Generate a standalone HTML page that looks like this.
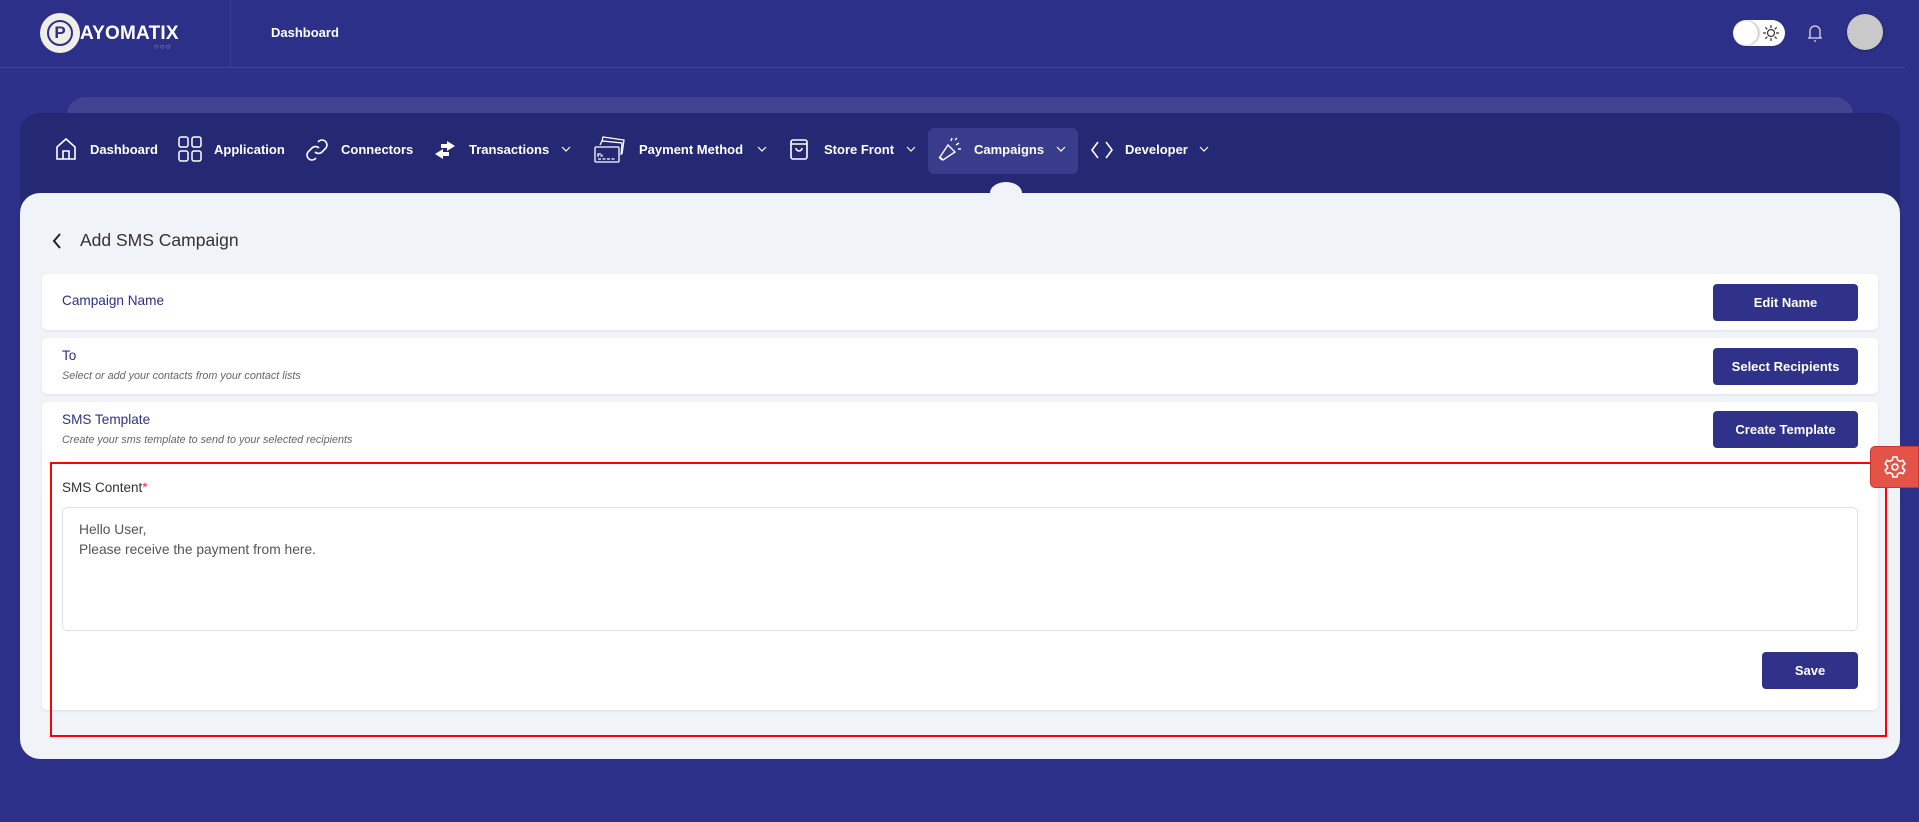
<!DOCTYPE html>
<html><head><meta charset="utf-8"><style>
*{box-sizing:border-box;margin:0;padding:0}
body{width:1919px;height:822px;background:#2d3088;font-family:"Liberation Sans",sans-serif;position:relative;overflow:hidden}
.a{position:absolute}
.nav{color:#fff;font-weight:bold;font-size:13px;top:142px}
.ch{top:143px}
.card{position:absolute;left:42px;width:1836px;background:#fff;border-radius:5px;box-shadow:0 1px 2px rgba(0,0,0,.08)}
.t{position:absolute;left:20px;color:#2d3088;font-size:13.6px}
.s{position:absolute;left:20px;color:#666;font-size:10.8px;font-style:italic}
.btn{position:absolute;background:#2f3288;color:#fff;font-weight:bold;font-size:13px;border-radius:4px;text-align:center}
</style></head><body>
<!-- header -->
<div class="a" style="left:40px;top:13px;width:40px;height:40px;border-radius:50%;background:#f0eee8"></div>
<div class="a" style="left:47px;top:20px;width:26px;height:26px;border-radius:50%;border:2px solid #2d3088;color:#2d3088;font-weight:bold;font-size:17px;text-align:center;line-height:22px">P</div>
<div class="a" style="left:80px;top:23px;color:#fff;font-weight:bold;font-size:19px;letter-spacing:0.2px">AYOMATIX</div>
<div class="a" style="left:154px;top:42px;color:#aaa;font-size:8px;letter-spacing:1px">○○○</div>
<div class="a" style="left:230px;top:0;width:1px;height:67px;background:#3c3f96"></div>
<div class="a" style="left:0;top:67px;width:1905px;height:1px;background:#3f43a0"></div>
<div class="a" style="left:271px;top:25px;color:#fff;font-weight:bold;font-size:13px">Dashboard</div>
<div class="a" style="left:1733px;top:20px;width:52px;height:26px;border-radius:13px;background:#fff"></div>
<div class="a" style="left:1734px;top:21px;width:24px;height:24px;border-radius:50%;background:#fff;box-shadow:1px 0 2px rgba(0,0,0,.35)"></div>
<svg class="a" style="left:1762px;top:24px" width="18" height="18" viewBox="0 0 18 18" fill="none" stroke="#333" stroke-width="1.2"><circle cx="9" cy="9" r="3.5"/><path d="M9 1v3M9 14v3M1 9h3M14 9h3M3.3 3.3l2 2M12.7 12.7l2 2M3.3 14.7l2-2M12.7 5.3l2-2"/></svg>
<svg class="a" style="left:1806px;top:22px" width="18" height="22" viewBox="0 0 18 22" fill="none" stroke="#ddd" stroke-width="1.3"><path d="M4 16V9a5 5 0 0110 0v7M2 16h14M8 19h2"/></svg>
<div class="a" style="left:1847px;top:14px;width:36px;height:36px;border-radius:50%;background:#c9c9c9;box-shadow:0 1px 3px rgba(0,0,0,.3)"></div>
<!-- bands -->
<div class="a" style="left:67px;top:97px;width:1786px;height:40px;border-radius:18px 18px 0 0;background:#414292"></div>
<div class="a" style="left:20px;top:113px;width:1880px;height:140px;border-radius:20px 20px 0 0;background:#252872"></div>
<div class="a" style="left:928px;top:128px;width:150px;height:46px;border-radius:6px;background:#393b8b"></div>
<div class="a" style="left:990px;top:182px;width:32px;height:22px;border-radius:50% 50% 0 0;background:#f0f3f8"></div>
<div class="a" style="left:20px;top:193px;width:1880px;height:566px;border-radius:20px;background:#f0f3f8"></div>
<!-- nav icons -->
<svg class="a" style="left:55px;top:137px" width="22" height="24" viewBox="0 0 22 24" fill="none" stroke="#fff" stroke-width="1.6"><path d="M2 10L11 2l9 8v12H2zM8 22v-8h6v8"/></svg>
<svg class="a" style="left:178px;top:136px" width="24" height="26" viewBox="0 0 24 26" fill="none" stroke="#fff" stroke-width="1.5"><rect x="1" y="1" width="9" height="10" rx="2"/><rect x="14" y="1" width="9" height="10" rx="2"/><rect x="1" y="15" width="9" height="10" rx="2"/><rect x="14" y="15" width="9" height="10" rx="2"/></svg>
<svg class="a" style="left:305px;top:138px" width="24" height="24" viewBox="0 0 24 24" fill="none" stroke="#fff" stroke-width="1.6"><path d="M10 14a5 5 0 007 0l4-4a5 5 0 00-7-7l-1 1M14 10a5 5 0 00-7 0l-4 4a5 5 0 007 7l1-1"/></svg>
<svg class="a" style="left:433px;top:140px" width="24" height="20" viewBox="0 0 24 20" fill="#fff"><path d="M14 1l8 5-8 5V8H8V4h6zM10 9l-8 5 8 5v-3h6v-4h-6z"/></svg>
<svg class="a" style="left:594px;top:136px" width="32" height="28" viewBox="0 0 32 28" fill="none" stroke="#fff" stroke-width="1.3"><path d="M8 5l1-4 21 3-2 14"/><path d="M6 9l2-4 20 2-1 12"/><rect x="1" y="11" width="24" height="15" rx="1"/><path d="M4 18h4v2H4zM4 23h18" stroke-dasharray="3 1.5"/></svg>
<svg class="a" style="left:790px;top:137px" width="18" height="24" viewBox="0 0 18 24" fill="none" stroke="#fff" stroke-width="1.6"><rect x="1" y="3" width="16" height="19" rx="2"/><path d="M1 7h16M6 11a3 3 0 006 0"/></svg>
<svg class="a" style="left:937px;top:137px" width="26" height="26" viewBox="0 0 26 26" fill="none" stroke="#fff" stroke-width="1.4"><path d="M3 20l8-12 7 7-12 8zM5 23l-3-3M14 4l1-3M19 8l3-2M18 3l2-2M21 12h3"/></svg>
<svg class="a" style="left:1090px;top:140px" width="24" height="20" viewBox="0 0 24 20" fill="none" stroke="#fff" stroke-width="1.6"><path d="M8 2L2 10l6 8M16 2l6 8-6 8"/></svg>
<div class="a nav" style="left:90px">Dashboard</div>
<div class="a nav" style="left:214px">Application</div>
<div class="a nav" style="left:341px">Connectors</div>
<div class="a nav" style="left:469px">Transactions</div>
<div class="a nav" style="left:639px">Payment Method</div>
<div class="a nav" style="left:824px">Store Front</div>
<div class="a nav" style="left:974px">Campaigns</div>
<div class="a nav" style="left:1125px">Developer</div>
<svg class="a ch" style="left:560px" width="12" height="12" viewBox="0 0 12 12" fill="none" stroke="#fff" stroke-width="1.2"><path d="M2 4l4 4 4-4"/></svg>
<svg class="a ch" style="left:756px" width="12" height="12" viewBox="0 0 12 12" fill="none" stroke="#fff" stroke-width="1.2"><path d="M2 4l4 4 4-4"/></svg>
<svg class="a ch" style="left:905px" width="12" height="12" viewBox="0 0 12 12" fill="none" stroke="#fff" stroke-width="1.2"><path d="M2 4l4 4 4-4"/></svg>
<svg class="a ch" style="left:1055px" width="12" height="12" viewBox="0 0 12 12" fill="none" stroke="#fff" stroke-width="1.2"><path d="M2 4l4 4 4-4"/></svg>
<svg class="a ch" style="left:1198px" width="12" height="12" viewBox="0 0 12 12" fill="none" stroke="#fff" stroke-width="1.2"><path d="M2 4l4 4 4-4"/></svg>
<!-- content -->
<svg class="a" style="left:50px;top:232px" width="14" height="18" viewBox="0 0 14 18" fill="none" stroke="#222" stroke-width="2"><path d="M10 2L4 9l6 7"/></svg>
<div class="a" style="left:80px;top:230px;font-size:17.5px;color:#333">Add SMS Campaign</div>
<div class="card" style="top:274px;height:56px"><div class="t" style="top:19px">Campaign Name</div></div>
<div class="card" style="top:338px;height:56px"><div class="t" style="top:10px">To</div><div class="s" style="top:32px">Select or add your contacts from your contact lists</div></div>
<div class="card" style="top:402px;height:308px"><div class="t" style="top:10px">SMS Template</div><div class="s" style="top:32px">Create your sms template to send to your selected recipients</div>
<div class="a" style="left:20px;top:78px;font-size:13.5px;color:#333">SMS Content<span style="color:#e33">*</span></div>
<div class="a" style="left:20px;top:105px;width:1796px;height:124px;border:1px solid #dde2ea;border-radius:5px;padding:12px 16px;font-size:13.8px;line-height:20px;color:#555">Hello User,<br>Please receive the payment from here.</div>
</div>
<div class="btn" style="left:1713px;top:284px;width:145px;height:37px;line-height:37px">Edit Name</div>
<div class="btn" style="left:1713px;top:348px;width:145px;height:37px;line-height:37px">Select Recipients</div>
<div class="btn" style="left:1713px;top:411px;width:145px;height:37px;line-height:37px">Create Template</div>
<div class="btn" style="left:1762px;top:652px;width:96px;height:37px;line-height:37px">Save</div>
<div class="a" style="left:50px;top:462px;width:1837px;height:275px;border:2px solid #f00"></div>
<div class="a" style="left:1870px;top:446px;width:49px;height:42px;background:#e35446;border:1px solid #c33;border-radius:5px 0 0 5px"></div>
<svg class="a" style="left:1883px;top:455px" width="24" height="24" viewBox="0 0 24 24" fill="none" stroke="#fff" stroke-width="1.6"><circle cx="12" cy="12" r="3"/><path d="M10 2h4l.6 3 2.4 1.4 2.9-1 2 3.4-2.3 2v2.4l2.3 2-2 3.4-2.9-1L14.6 19 14 22h-4l-.6-3L7 17.6l-2.9 1-2-3.4 2.3-2v-2.4l-2.3-2 2-3.4 2.9 1L9.4 5z"/></svg>
</body></html>
